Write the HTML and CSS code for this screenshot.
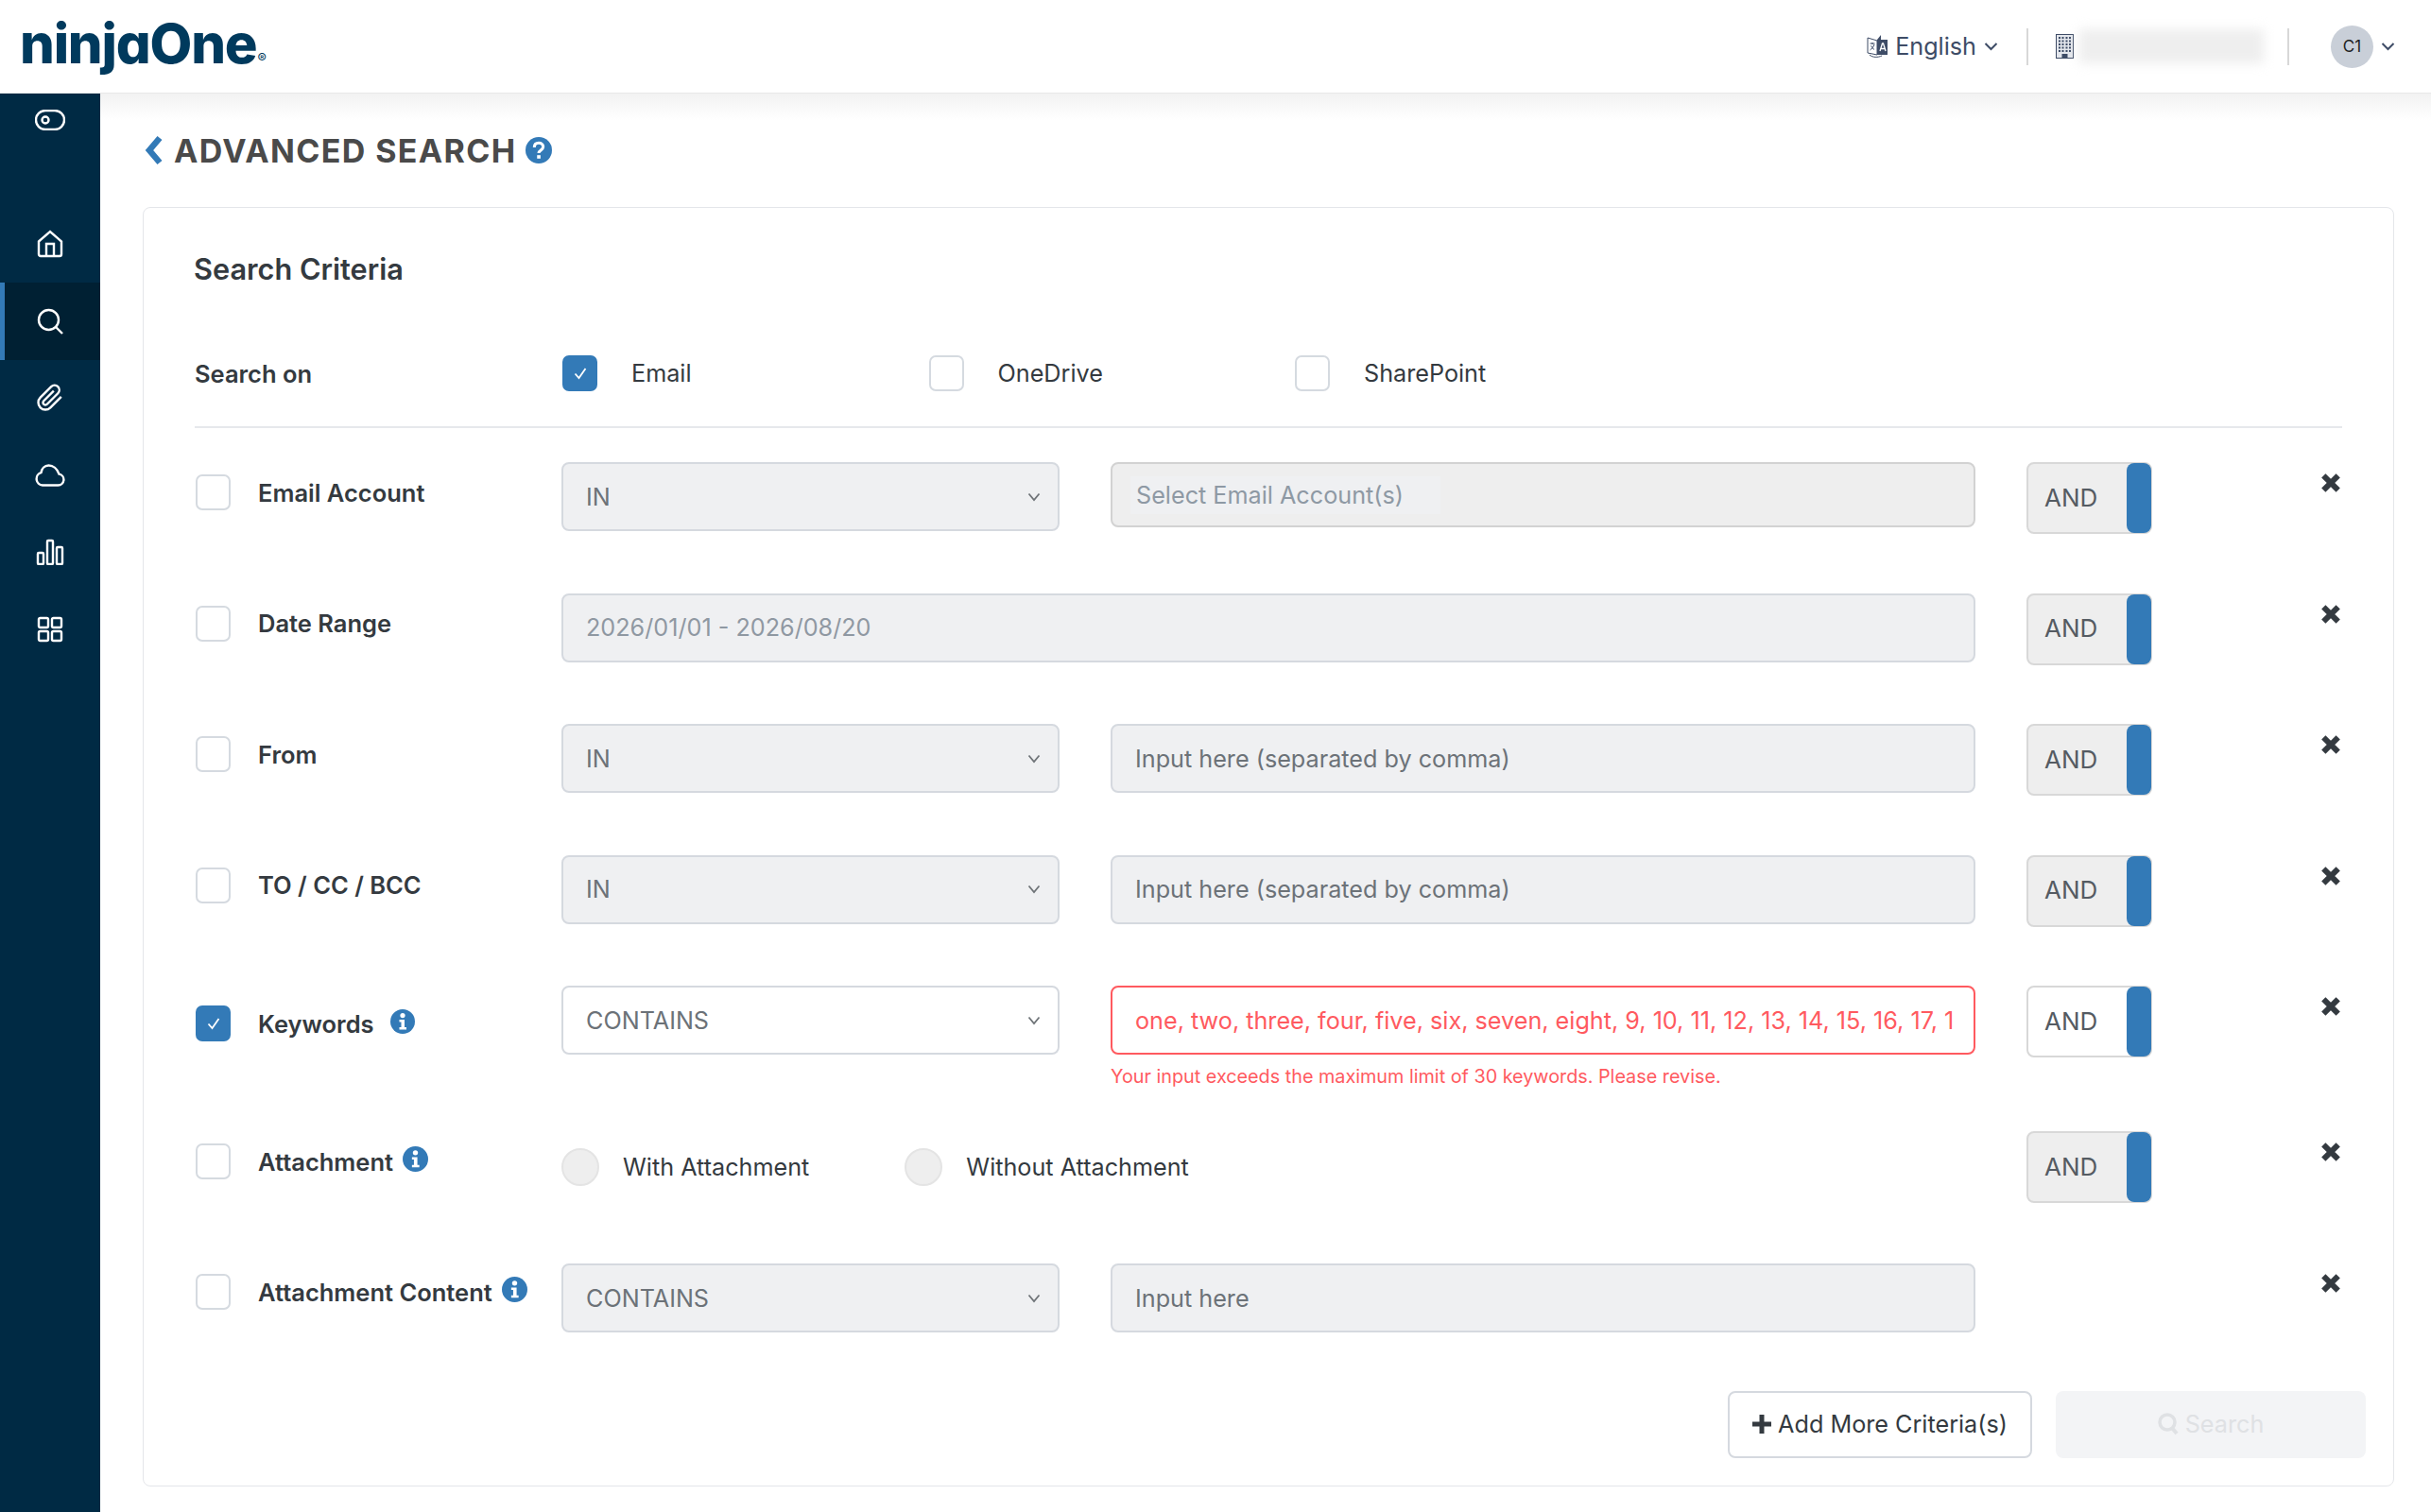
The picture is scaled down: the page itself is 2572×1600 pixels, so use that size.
FILE: index.html
```html
<!DOCTYPE html>
<html lang="en">
<head>
<meta charset="UTF-8">
<meta name="viewport" content="width=device-width, initial-scale=1.0">
<title>Advanced Search</title>
<link rel="stylesheet" href="styles.css">
</head>
<body>
<svg class="defs" width="0" height="0">
    <symbol id="info" viewBox="0 0 26 26">
        <circle cx="13" cy="13" r="13" fill="#337ab7"/>
        <circle cx="13" cy="6.6" r="2.6" fill="#fff"/>
        <path d="M9.5 11h5.5v8h2v2.5H9.5V19h2v-5.500h-2z" fill="#fff"/>
    </symbol>
    <symbol id="close" viewBox="0 0 20 20">
        <path d="M3 3l14 14M17 3L3 17" stroke="#343a40" stroke-width="5.500" fill="none"/>
    </symbol>
    <symbol id="caret" viewBox="0 0 14 10">
        <path d="M1.500 1.500L7 8l5.500-6.500" stroke="#6f7478" stroke-width="1.800" fill="none"/>
    </symbol>
    <symbol id="tick" viewBox="0 0 20 20">
        <path d="M4.500 10.500l4 4.500 7-10" stroke="#fff" stroke-width="1.800" fill="none"/>
    </symbol>
</svg>

<header class="topbar">
    <div class="logo">ninjaOne<span class="logo-reg">®</span></div>
    <div class="top-right">
        <div class="lang">
            <svg width="23" height="26" viewBox="0 0 23 26">
                <path d="M1 4l10 3v15L1 20z" fill="#fff" stroke="#3e4c66" stroke-width="1"/>
                <path d="M11 6l4-5v5h7v16H11z" fill="#3e4c66"/>
                <path d="M3.500 10h5M6 9v2M8 11c-1 3-3 5-4.500 6M4.500 12.500c1 1.500 2 3 3.500 4" stroke="#3e4c66" stroke-width="1" fill="none"/>
                <path d="M14 18l2.500-8h1l2.500 8M15 15.500h4" stroke="#fff" stroke-width="1.300" fill="none"/>
                <path d="M3 22c3 3 9 3 13 1" stroke="#3e4c66" stroke-width="1" fill="none"/>
            </svg>
            <span>English</span>
            <svg class="top-caret" width="15" height="10" viewBox="0 0 15 10"><path d="M1.500 2l6 6 6-6" stroke="#3e4c66" stroke-width="2" fill="none"/></svg>
        </div>
        <div class="divider"></div>
        <div class="tenant">
            <svg width="19" height="26" viewBox="0 0 19 26">
                <rect x="0.500" y="0.500" width="18" height="25" fill="#e3e6ec" stroke="#3e4c66"/>
                <path d="M3 4h2M6.500 4h2M10.500 4h2M14 4h2M3 7.500h2M6.500 7.500h2M10.500 7.500h2M14 7.500h2M3 11h2M6.500 11h2M10.500 11h2M14 11h2M3 14.500h2M6.500 14.500h2M10.500 14.500h2M14 14.500h2M3 18h2M6.500 18h2M10.500 18h2M14 18h2" stroke="#3e4c66" stroke-width="2"/>
                <rect x="6.500" y="21" width="6" height="5" fill="#3e4c66"/>
            </svg>
            <div class="tenant-name"></div>
        </div>
        <div class="divider"></div>
        <div class="user">
            <div class="avatar">C1</div>
            <svg class="top-caret" width="15" height="10" viewBox="0 0 15 10"><path d="M1.500 2l6 6 6-6" stroke="#3e4c66" stroke-width="2" fill="none"/></svg>
        </div>
    </div>
</header>

<div class="app">
    <nav class="sidebar">
        <div class="nav-top">
            <svg width="32" height="22" viewBox="0 0 32 22" class="icon">
                <rect x="1" y="1" width="30" height="20" rx="10"/>
                <circle cx="11" cy="11" r="3.500"/>
            </svg>
        </div>
        <a class="nav-item">
            <svg width="30" height="30" viewBox="0 0 30 30" class="icon">
                <path d="M3 12.500L15 2l12 10.500V26a2 2 0 0 1-2 2H5a2 2 0 0 1-2-2z"/>
                <path d="M11 28V15h8v13"/>
            </svg>
        </a>
        <a class="nav-item active">
            <svg width="30" height="30" viewBox="0 0 30 30" class="icon">
                <circle cx="13.500" cy="13.500" r="10.500"/>
                <path d="M21 21l7 7"/>
            </svg>
        </a>
        <a class="nav-item">
            <svg width="30" height="30" viewBox="0 0 24 24" class="icon clip">
                <path d="M21.440 11.050l-9.190 9.190a6 6 0 0 1-8.490-8.490l9.190-9.190a4 4 0 0 1 5.660 5.660l-9.200 9.190a2 2 0 0 1-2.830-2.830l8.490-8.480"/>
            </svg>
        </a>
        <a class="nav-item">
            <svg width="32" height="24" viewBox="0 0 32 24" class="icon">
                <path d="M8 22.500h16.500a6 6 0 0 0 1-11.900C23.500 5 19 1.500 14.500 1.500 10 1.500 7 5 6.500 9.200A6.800 6.800 0 0 0 8 22.500z"/>
            </svg>
        </a>
        <a class="nav-item">
            <svg width="30" height="28" viewBox="0 0 30 28" class="icon">
                <rect x="2" y="15" width="6" height="12" rx="1"/>
                <rect x="12" y="2" width="6" height="25" rx="1"/>
                <rect x="22" y="9" width="6" height="18" rx="1"/>
            </svg>
        </a>
        <a class="nav-item">
            <svg width="28" height="28" viewBox="0 0 28 28" class="icon">
                <rect x="2" y="2" width="10" height="10" rx="1.500"/>
                <rect x="16" y="2" width="10" height="10" rx="1.500"/>
                <rect x="2" y="16" width="10" height="10" rx="1.500"/>
                <rect x="16" y="16" width="10" height="10" rx="1.500"/>
            </svg>
        </a>
    </nav>

    <main class="content">
        <div class="page-title">
            <svg width="20" height="32" viewBox="0 0 20 32"><path d="M16 3L5 16l11 13" stroke="#337ab7" stroke-width="6.500" fill="none"/></svg>
            <h1>ADVANCED SEARCH</h1>
            <svg width="28" height="28" viewBox="0 0 27 27">
                <circle cx="13.500" cy="13.500" r="13.500" fill="#337ab7"/>
                <path d="M9 10.500c0-3 2-4.500 4.500-4.500s4.500 1.500 4.500 4c0 3.500-4.500 3.500-4.500 6.500" stroke="#fff" stroke-width="3" fill="none"/>
                <rect x="11.800" y="18.500" width="3.500" height="3.500" fill="#fff"/>
            </svg>
        </div>

        <section class="card">
            <h2>Search Criteria</h2>

            <div class="search-on">
                <div class="search-on-label">Search on</div>
                <div class="source"><span class="check checked"><svg width="20" height="20"><use href="#tick"/></svg></span><span>Email</span></div>
                <div class="source"><span class="check"></span><span>OneDrive</span></div>
                <div class="source"><span class="check"></span><span>SharePoint</span></div>
            </div>

            <div class="row">
                <div class="row-label"><span class="check"></span><span class="name">Email Account</span></div>
                <div class="field off select"><span>IN</span><svg width="14" height="10"><use href="#caret"/></svg></div>
                <div class="field account"><span class="account-pill">Select Email Account(s)</span></div>
                <div class="andor"><span>AND</span><i class="knob"></i></div>
                <svg class="remove" width="22" height="22"><use href="#close"/></svg>
            </div>

            <div class="row">
                <div class="row-label"><span class="check"></span><span class="name">Date Range</span></div>
                <div class="field off dates wide">2026/01/01 - 2026/08/20</div>
                <div class="andor"><span>AND</span><i class="knob"></i></div>
                <svg class="remove" width="22" height="22"><use href="#close"/></svg>
            </div>

            <div class="row">
                <div class="row-label"><span class="check"></span><span class="name">From</span></div>
                <div class="field off select"><span>IN</span><svg width="14" height="10"><use href="#caret"/></svg></div>
                <div class="field off">Input here (separated by comma)</div>
                <div class="andor"><span>AND</span><i class="knob"></i></div>
                <svg class="remove" width="22" height="22"><use href="#close"/></svg>
            </div>

            <div class="row">
                <div class="row-label"><span class="check"></span><span class="name">TO / CC / BCC</span></div>
                <div class="field off select"><span>IN</span><svg width="14" height="10"><use href="#caret"/></svg></div>
                <div class="field off">Input here (separated by comma)</div>
                <div class="andor"><span>AND</span><i class="knob"></i></div>
                <svg class="remove" width="22" height="22"><use href="#close"/></svg>
            </div>

            <div class="row row-error">
                <div class="row-label keywords"><span class="check checked"><svg width="20" height="20"><use href="#tick"/></svg></span><span class="name">Keywords</span><svg class="info" width="26" height="26"><use href="#info"/></svg></div>
                <div class="field select"><span>CONTAINS</span><svg width="14" height="10"><use href="#caret"/></svg></div>
                <div>
                    <div class="field invalid"><span class="clip-text">one, two, three, four, five, six, seven, eight, 9, 10, 11, 12, 13, 14, 15, 16, 17, 1</span></div>
                    <div class="error">Your input exceeds the maximum limit of 30 keywords. Please revise.</div>
                </div>
                <div class="andor on"><span>AND</span><i class="knob"></i></div>
                <svg class="remove" width="22" height="22"><use href="#close"/></svg>
            </div>

            <div class="row row-attach">
                <div class="row-label"><span class="check"></span><span class="name">Attachment</span><svg class="info tight" width="27" height="27"><use href="#info"/></svg></div>
                <div class="radios wide">
                    <div class="radio-opt"><span class="radio"></span><span>With Attachment</span></div>
                    <div class="radio-opt"><span class="radio"></span><span>Without Attachment</span></div>
                </div>
                <div class="andor"><span>AND</span><i class="knob"></i></div>
                <svg class="remove" width="22" height="22"><use href="#close"/></svg>
            </div>

            <div class="row row-last">
                <div class="row-label content-label"><span class="check"></span><span class="name">Attachment Content</span><svg class="info tight" width="27" height="27"><use href="#info"/></svg></div>
                <div class="field off select"><span>CONTAINS</span><svg width="14" height="10"><use href="#caret"/></svg></div>
                <div class="field off">Input here</div>
                <div></div>
                <svg class="remove" width="22" height="22"><use href="#close"/></svg>
            </div>

            <div class="actions">
                <button class="btn add">
                    <svg width="20" height="20" viewBox="0 0 20 20"><path d="M10 0v20M0 10h20" stroke="#343a40" stroke-width="5"/></svg>
                    Add More Criteria(s)
                </button>
                <button class="btn search">
                    <svg width="22" height="24" viewBox="0 0 22 24"><circle cx="10" cy="10" r="8" fill="none" stroke="#dfe1e4" stroke-width="3.500"/><path d="M15 16l5 6" stroke="#dfe1e4" stroke-width="4"/></svg>
                    Search
                </button>
            </div>
        </section>
    </main>
</div>
</body>
</html>
```

FILE: styles.css
```css
* {
    box-sizing: border-box;
}

html,
body {
    height: 100%;
}

body {
    margin: 0;
    display: flex;
    flex-direction: column;
    background-color: #fff;
    font-family: "Inter", "Liberation Sans", sans-serif;
    font-size: 25.2px;
    color: #343a40;
    overflow: hidden;
}

.defs {
    position: absolute;
}

/* top bar */
.topbar {
    height: 99px;
    flex: none;
    display: flex;
    align-items: center;
    justify-content: space-between;
    border-bottom: 1px solid #e8e8e8;
    padding: 0 38px 0 21px;
}

.logo {
    font-size: 58px;
    font-weight: 800;
    letter-spacing: -1.200px;
    color: #003a5d;
    font-feature-settings: "cv11" 1;
    line-height: 60px;
    margin-top: 10px;
}

.logo-reg {
    font-size: 14px;
    font-weight: 500;
    letter-spacing: 0;
    vertical-align: baseline;
    margin-left: 1px;
}

.top-right {
    display: flex;
    align-items: center;
}

.lang {
    display: flex;
    align-items: center;
    color: #3e4c66;
}

.lang span {
    margin: 0 8px 0 7px;
}

.divider {
    width: 2px;
    height: 39px;
    background-color: #d8d8d8;
}

.lang + .divider {
    margin-left: 30px;
}

.tenant {
    display: flex;
    align-items: center;
    margin: 0 25px 0 29px;
}

.tenant-name {
    width: 195px;
    height: 36px;
    margin-left: 6px;
    background-color: #eee;
    filter: blur(6px);
}

.user {
    display: flex;
    align-items: center;
    margin-left: 44px;
}

.avatar {
    width: 45px;
    height: 45px;
    border-radius: 50%;
    background-color: #c9cfd8;
    color: #222;
    font-size: 17px;
    display: flex;
    align-items: center;
    justify-content: center;
    margin-right: 8px;
}

.top-caret {
    flex: none;
}

/* sidebar */
.app {
    flex: 1;
    display: flex;
    min-height: 0;
}

.sidebar {
    width: 106px;
    flex: none;
    background-color: #002a44;
}

.nav-top {
    height: 118.5px;
    padding-top: 17px;
    padding-left: 37px;
}

.nav-item {
    height: 81.5px;
    display: flex;
    align-items: center;
    justify-content: center;
}

.nav-item.active {
    background-color: #002033;
    border-left: 5px solid #337ab7;
    padding-right: 5px;
}

.icon {
    display: block;
    fill: none;
    stroke: #fff;
    stroke-width: 2.400;
}

.icon.clip {
    stroke-width: 1.900;
}

/* page */
.content {
    flex: 1;
    padding: 0 39px 27px 45px;
    background: linear-gradient(#f2f2f2, #fff 28px) no-repeat;
    display: flex;
    flex-direction: column;
}

.page-title {
    height: 120px;
    flex: none;
    display: flex;
    align-items: center;
    padding-left: 2px;
}

.page-title h1 {
    margin: 0 10px 0 11px;
    font-size: 34px;
    font-weight: 700;
    letter-spacing: 1.350px;
    color: #4a4a4a;
}

.card {
    flex: 1;
    background-color: #fff;
    border: 1px solid #e4e6ea;
    border-radius: 8px;
    padding: 45px 54px 0 54px;
}

.card h2 {
    margin: 0 0 0 -1px;
    font-size: 30.7px;
    line-height: 40px;
    font-weight: 600;
    color: #343a40;
}

.search-on {
    display: flex;
    align-items: center;
    margin-top: 71px;
    padding-bottom: 37px;
    border-bottom: 2px solid #e6e8ec;
    margin-bottom: 36px;
}

.search-on-label {
    width: 389px;
    flex: none;
    font-weight: 600;
    font-size: 25.5px;
}

.source {
    width: 387.5px;
    display: flex;
    align-items: center;
    gap: 36px;
}

.check {
    width: 37px;
    height: 38px;
    flex: none;
    border: 2px solid #d5dae0;
    border-radius: 7px;
    background-color: #fff;
    display: flex;
    align-items: center;
    justify-content: center;
}

.check.checked {
    background-color: #337ab7;
    border-color: #337ab7;
}

/* criteria rows */
.row {
    display: grid;
    grid-template-columns: 334px 527px 915px 133px 1fr;
    column-gap: 54px;
    align-items: start;
    height: 138.5px;
}

.row-error {
    height: 154px;
}

.row-attach {
    height: 140px;
}

.row-last {
    height: 134.5px;
}

.row-last .remove {
    margin-top: 10px;
}

.row-label {
    display: flex;
    align-items: center;
    gap: 29px;
    padding: 13px 0 0 1px;
}

.row-label.keywords {
    padding-top: 21px;
}

.row-label.content-label {
    padding-top: 11px;
}

.name {
    font-weight: 600;
    font-size: 25.5px;
    white-space: nowrap;
}

.info {
    flex: none;
    margin-left: -12px;
    margin-top: -4px;
}

.info.tight {
    margin-left: -19px;
    margin-top: -6px;
}

.field {
    height: 73px;
    padding: 0 25px 0 24px;
    display: flex;
    align-items: center;
    border: 2px solid #d5d9df;
    border-radius: 8px;
    background-color: #fff;
    color: #6c7278;
}

.field.off {
    background-color: #eff0f2;
}

.select {
    justify-content: space-between;
    padding-right: 18px;
}

.wide {
    grid-column: span 2;
}

.dates {
    color: #8f98a2;
}

.account {
    height: 69px;
    padding: 0 0 0 19px;
    background-color: #eee;
    border-color: #d2d2d2;
    color: #8e99a4;
}

.account-pill {
    width: 328px;
    height: 40px;
    background-color: #eff0f2;
    padding-left: 6px;
    display: flex;
    align-items: center;
    white-space: nowrap;
}

.invalid {
    border-color: #ff5a5f;
    color: #ff5a5f;
}

.clip-text {
    white-space: nowrap;
}

.error {
    margin-top: 11px;
    font-size: 19.800px;
    color: #ff5a5f;
}

.andor {
    position: relative;
    height: 76px;
    padding: 0 0 2px 17px;
    display: flex;
    align-items: center;
    background-color: #eee;
    border: 2px solid #d8d8d8;
    border-radius: 8px;
    color: #555b62;
    font-size: 26px;
}

.andor.on {
    background-color: #fff;
}

.knob {
    position: absolute;
    top: -1px;
    right: -1px;
    bottom: -1px;
    width: 26px;
    background-color: #337ab7;
    border-radius: 8px;
}

.remove {
    justify-self: end;
    margin: 11px 1px 0 0;
}

.radios {
    display: flex;
    gap: 101px;
    padding-top: 18px;
}

.radio-opt {
    display: flex;
    align-items: center;
    gap: 25px;
    color: #343a40;
}

.radio {
    width: 40px;
    height: 40px;
    border-radius: 50%;
    background-color: #eee;
    border: 2px solid #e4e4e4;
}

/* footer buttons */
.actions {
    display: flex;
    justify-content: flex-end;
    gap: 25px;
    margin-right: -25px;
}

.btn {
    height: 71px;
    display: flex;
    align-items: center;
    justify-content: center;
    gap: 7px;
    font: inherit;
    border-radius: 8px;
}

.add {
    width: 322px;
    background-color: #fff;
    border: 2px solid #d5d9df;
    color: #343a40;
}

.search {
    width: 328px;
    background-color: #f3f4f6;
    border: none;
    color: #dfe1e4;
}
```
